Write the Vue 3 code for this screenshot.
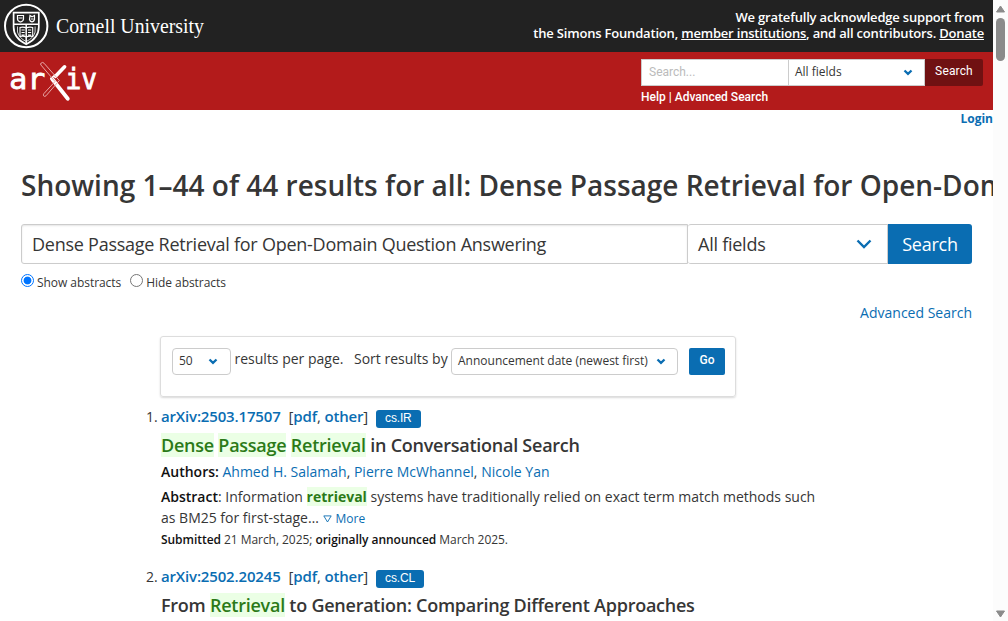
<script setup>
const results = [
  {
    number: '1.',
    id: 'arXiv:2503.17507',
    subject: 'cs.IR',
    title: [
      { text: 'Dense', hit: true },
      { text: ' ' },
      { text: 'Passage', hit: true },
      { text: ' ' },
      { text: 'Retrieval', hit: true },
      { text: ' in Conversational Search' },
    ],
    authors: ['Ahmed H. Salamah', 'Pierre McWhannel', 'Nicole Yan'],
  },
  {
    number: '2.',
    id: 'arXiv:2502.20245',
    subject: 'cs.CL',
    title: [
      { text: 'From ' },
      { text: 'Retrieval', hit: true },
      { text: ' to Generation: Comparing Different Approaches' },
    ],
    authors: null,
  },
]
</script>

<template>
  <div class="window">
    <div class="page">
      <header class="cornell">
        <svg class="cornell-logo" width="210" height="52" viewBox="0 0 210 52">
          <g fill="none" stroke="#fff">
            <circle cx="26.2" cy="26" r="21.2" stroke-width="2" />
            <path d="M13.6 12.6H38.8V27c0 8.400-4.600 13.400-12.600 17.200C18.200 40.400 13.600 35.400 13.600 27Z" stroke-width="1.700" />
            <path d="M14 24.200h24.500M26.200 24.200v19" stroke-width="1.500" />
            <path d="M17.500 15.500h6v3.500q0 2-3 3-3-1-3-3zM18.500 18h4M30 15.500l2 1.300 2.500-1.300v4q-.5 2-2.500 2.300-2-.3-2.500-2.300zM31 19h2.500" stroke-width="1.200" />
            <path d="M20 27.500q3.500-1 6.200.5 3-1.500 6.500-.5v9q-3.500-1-6.500.5-2.700-1.500-6.200-.5zM21.500 30h3.200m-3.200 2.500h3.200m-3.200 2.500h3.200M28 30h3.200m-3.200 2.500h3.200m-3.200 2.500h3.200" stroke-width="1.100" />
            <path d="M17.500 26.500v5.500q1.500 6 8.700 9.500 7.500-3.500 8.900-9.500v-5.500" stroke-width=".8" />
          </g>
          <text class="wordmark" x="56" y="33" textLength="148" lengthAdjust="spacingAndGlyphs">Cornell University</text>
        </svg>
        <div class="support">
          <div>We gratefully acknowledge support from</div>
          <div>the Simons Foundation, <a class="u">member institutions</a>, and all contributors. <a class="u">Donate</a></div>
        </div>
      </header>

      <div class="banner">
        <svg class="arxiv-logo" width="110" height="58" viewBox="0 0 110 58">
          <text class="arx" x="9.300" y="36.500" textLength="36" lengthAdjust="spacingAndGlyphs">ar</text>
          <text class="arx" x="65.500" y="36.500" textLength="31.500" lengthAdjust="spacingAndGlyphs">iv</text>
          <path d="M64.600 14.800 55.500 24.300" fill="none" stroke="#fff" stroke-width="3.600" stroke-linecap="round" />
          <path d="M52 26.800 67.800 46.800" fill="none" stroke="#fff" stroke-width="3.800" stroke-linecap="round" />
          <path d="M55.500 22.500 51 26.500 53 30" fill="none" stroke="#fff" stroke-width="1.500" />
          <path d="M41.200 11q1.500-1.300 2.800.2L59.300 28.500 46 43.800q-1.500 1.300-2.300.1-.8-1 .2-2.300L55 29.500 41 13.100q-1-1.100.2-2.100Z" fill="none" stroke="#e8a8a8" stroke-width="1" />
        </svg>
        <div class="mini-search">
          <div class="mini-row">
            <div class="mini-input">Search...</div>
            <div class="mini-select">
              <span>All fields</span>
              <svg width="10" height="7" viewBox="0 0 10 7"><path d="M1.500 1.500 5 4.800 8.500 1.500" fill="none" stroke="#0a6db2" stroke-width="2.300" /></svg>
            </div>
            <div class="mini-button">Search</div>
          </div>
          <div class="mini-links">Help | Advanced Search</div>
        </div>
      </div>

      <div class="login"><a>Login</a></div>

      <h1>Showing 1–44 of 44 results for all: Dense Passage Retrieval for Open-Domain Question Answering</h1>

      <div class="search">
        <div class="query">Dense Passage Retrieval for Open-Domain Question Answering</div>
        <div class="field">
          <span>All fields</span>
          <svg width="16" height="12" viewBox="0 0 16 12"><path d="M1.500 2.500 8 9 14.500 2.500" fill="none" stroke="#0a6db2" stroke-width="2.400" /></svg>
        </div>
        <div class="go-search">Search</div>
      </div>

      <div class="toggles">
        <i class="radio on"></i><span class="show">Show abstracts</span>
        <i class="radio"></i><span>Hide abstracts</span>
      </div>
      <div class="advanced"><a>Advanced Search</a></div>

      <div class="sort">
        <div class="select size">
          <span>50</span>
          <svg width="10" height="7" viewBox="0 0 10 7"><path d="M1.500 1.500 5 4.800 8.500 1.500" fill="none" stroke="#0a6db2" stroke-width="2.300" /></svg>
        </div>
        <span class="per">results per page.</span>
        <span class="by">Sort results by</span>
        <div class="select order">
          <span>Announcement date (newest first)</span>
          <svg width="10" height="7" viewBox="0 0 10 7"><path d="M1.500 1.500 5 4.800 8.500 1.500" fill="none" stroke="#0a6db2" stroke-width="2.300" /></svg>
        </div>
        <div class="go">Go</div>
      </div>

      <ol class="results">
        <li v-for="r in results" :key="r.id">
          <span class="num">{{ r.number }}</span>
          <div class="body">
            <div class="head">
              <a class="id">{{ r.id }}</a>
              <span class="formats">[<a>pdf</a>, <a>other</a>]</span>
              <span class="tag">{{ r.subject }}</span>
            </div>
            <p class="title"><span v-for="(t, i) in r.title" :key="i" :class="{ hit: t.hit }">{{ t.text }}</span></p>
            <template v-if="r.authors">
              <p class="authors"><b>Authors:</b> <template v-for="(a, i) in r.authors" :key="a"><template v-if="i">, </template><a>{{ a }}</a></template></p>
              <p class="abstract"><b>Abstract</b>: Information <span class="hit strong">retrieval</span> systems have traditionally relied on exact term match methods such<br>as BM25 for first-stage… <a class="more"><svg width="9" height="8" viewBox="0 0 9 8"><path d="M.8.900h7.400L4.500 7Z" fill="none" stroke="#0a6db2" stroke-width=".9" /></svg> More</a></p>
              <p class="dates"><b>Submitted</b> 21 March, 2025; <b>originally announced</b> March 2025.</p>
            </template>
          </div>
        </li>
      </ol>
    </div>

    <div class="scrollbar">
      <svg width="11" height="8" viewBox="0 0 11 8"><path d="M5.500 1 9.500 7h-8Z" fill="#8b8b8b" stroke="#8b8b8b" stroke-linejoin="round" /></svg>
      <div class="thumb"></div>
      <svg class="down" width="11" height="8" viewBox="0 0 11 8"><path d="M5.500 7 9.500 1h-8Z" fill="#8b8b8b" stroke="#8b8b8b" stroke-linejoin="round" /></svg>
    </div>
  </div>
</template>

<style>
html, body { margin: 0; overflow: hidden; }
</style>

<style scoped>
* { box-sizing: border-box; }
.window { display: flex; width: 1008px; height: 621px; overflow: hidden; background: #fff; font-family: "Open Sans", sans-serif; color: #363636; font-size: 14px; }
.page { width: 993px; flex: none; overflow: hidden; white-space: nowrap; }
a { color: #0a6db2; }
p { margin: 0; }
.cornell { height: 52px; background: #222; display: flex; justify-content: space-between; }
.cornell-logo { flex: none; }
.wordmark { font: 20.5px "Liberation Serif", serif; fill: #fff; }
.support { padding: 9px 9px 0 0; color: #fff; font-weight: 600; font-size: 13px; line-height: 16px; text-align: right; letter-spacing: -.19px; }
.u { color: #fff; text-decoration: underline; }
.banner { height: 58px; background: #b31b1b; display: flex; justify-content: space-between; }
.arx { font: 28px "DejaVu Sans Mono", monospace; fill: #fff; stroke: #fff; stroke-width: .8px; }
.mini-search { width: 352px; padding-top: 7px; }
.mini-row { display: flex; height: 27px; font-size: 12px; line-height: 24px; }
.mini-input { width: 148px; background: #fff; border: 1px solid #ccc; color: #bbb; padding-left: 7px; font-family: Roboto, sans-serif; letter-spacing: 0; }
.mini-select { width: 136px; background: #fff; border: 1px solid #ccc; border-left: 0; display: flex; align-items: center; justify-content: space-between; padding: 0 11px 1px 6px; }
.mini-button { width: 58px; background: #701112; color: #fff; text-align: center; border-radius: 0 2px 2px 0; font-family: Roboto, sans-serif; letter-spacing: .15px; }
.mini-links { font: 500 12px/16px Roboto, sans-serif; color: #fff; margin-top: 3px; }
.login { height: 18px; line-height: 18px; font-size: 12px; font-weight: 700; text-align: right; }
h1 { margin: 37px 0 0 21px; height: 40px; line-height: 40px; font-size: 28px; font-weight: 600; }
.search { display: flex; margin: 19px 21px 0; height: 40px; font-size: 18px; line-height: 38px; letter-spacing: -.25px; }
.query { width: 667px; border: 1px solid #ccc; border-radius: 3px 0 0 3px; padding-left: 10px; box-shadow: inset 0 1px 2px rgba(10, 10, 10, .1); }
.field { width: 200px; border: 1px solid #ccc; border-left: 0; border-radius: 3px 0 0 3px; display: flex; justify-content: space-between; align-items: center; padding: 0 15px 0 10px; }
.go-search { width: 84px; background: #0a6db2; color: #fff; line-height: 40px; text-align: center; border-radius: 0 3px 3px 0; }
.toggles { display: flex; align-items: center; margin: 8px 0 0 21px; height: 20px; font-size: 12px; letter-spacing: -.05px; }
.radio { width: 13px; height: 13px; border: 1px solid #767676; border-radius: 50%; margin: -3px 3px 0 0; }
.radio.on { border-color: #0075ff; background: radial-gradient(circle, #0075ff 3.5px, #fff 4.3px); }
.show { margin-right: 9px; }
.advanced { margin: 11px 21px 0; height: 20px; line-height: 20px; text-align: right; }
.sort { display: flex; margin: 13px 0 0 160px; width: 576px; height: 61px; border: 1px solid #ddd; border-radius: 3px; box-shadow: 0 1px 2px rgba(10, 10, 10, .15); padding: 11px 10px 0 11px; line-height: 22px; }
.select { height: 27px; border: 1px solid #ccc; border-radius: 4px; font-size: 12px; line-height: 23px; display: flex; align-items: center; justify-content: space-between; padding: 0 11px 1px 6px; }
.select span { padding-bottom: 1px; }
.size { width: 59px; padding-right: 12px; }
.per { width: 119px; padding-left: 3.500px; }
.by { padding-left: 4px; width: 101px; }
.order { width: 227px; }
.go { margin-left: 11px; width: 36px; height: 27px; border-radius: 2px; color: #fff; background: #0a6db2; text-align: center; font: 500 12px/24px Roboto, sans-serif; }
.results { list-style: none; margin: 6px 0 0; padding: 0 0 0 146px; }
li { display: flex; height: 160px; }
.num { width: 15px; line-height: 28px; }
.head { display: flex; height: 28px; line-height: 27px; font-weight: 600; font-size: 15px; letter-spacing: -.16px; }
.formats { margin-left: 8px; font-weight: 400; }
.formats a { font-weight: 600; }
.tag { margin: 7px 0 0 8px; height: 18px; padding: 0 9px; line-height: 16px; border-radius: 3px; background: #0a6db2; color: #fff; font-size: 12px; font-weight: 400; font-family: "Liberation Sans", sans-serif; }
.title { height: 30px; line-height: 29px; font-size: 18px; font-weight: 600; letter-spacing: -.25px; }
.hit { background: #ebffe5; color: #2b7a18; }
.strong { font-weight: 700; }
b { font-weight: 600; color: #111; }
.authors { height: 25px; line-height: 22px; }
.abstract { line-height: 21px; }
.more { font-size: 12px; margin-left: 1px; }
.dates { font-size: 12px; line-height: 22px; letter-spacing: -.05px; }
.scrollbar { width: 15px; height: 621px; background: #fcfcfc; display: flex; flex-direction: column; align-items: center; padding: 5px 0 3px; }
.thumb { width: 9px; height: 43px; border-radius: 5px; background: #8b8b8b; margin-top: 5px; }
.down { margin-top: auto; }
</style>
